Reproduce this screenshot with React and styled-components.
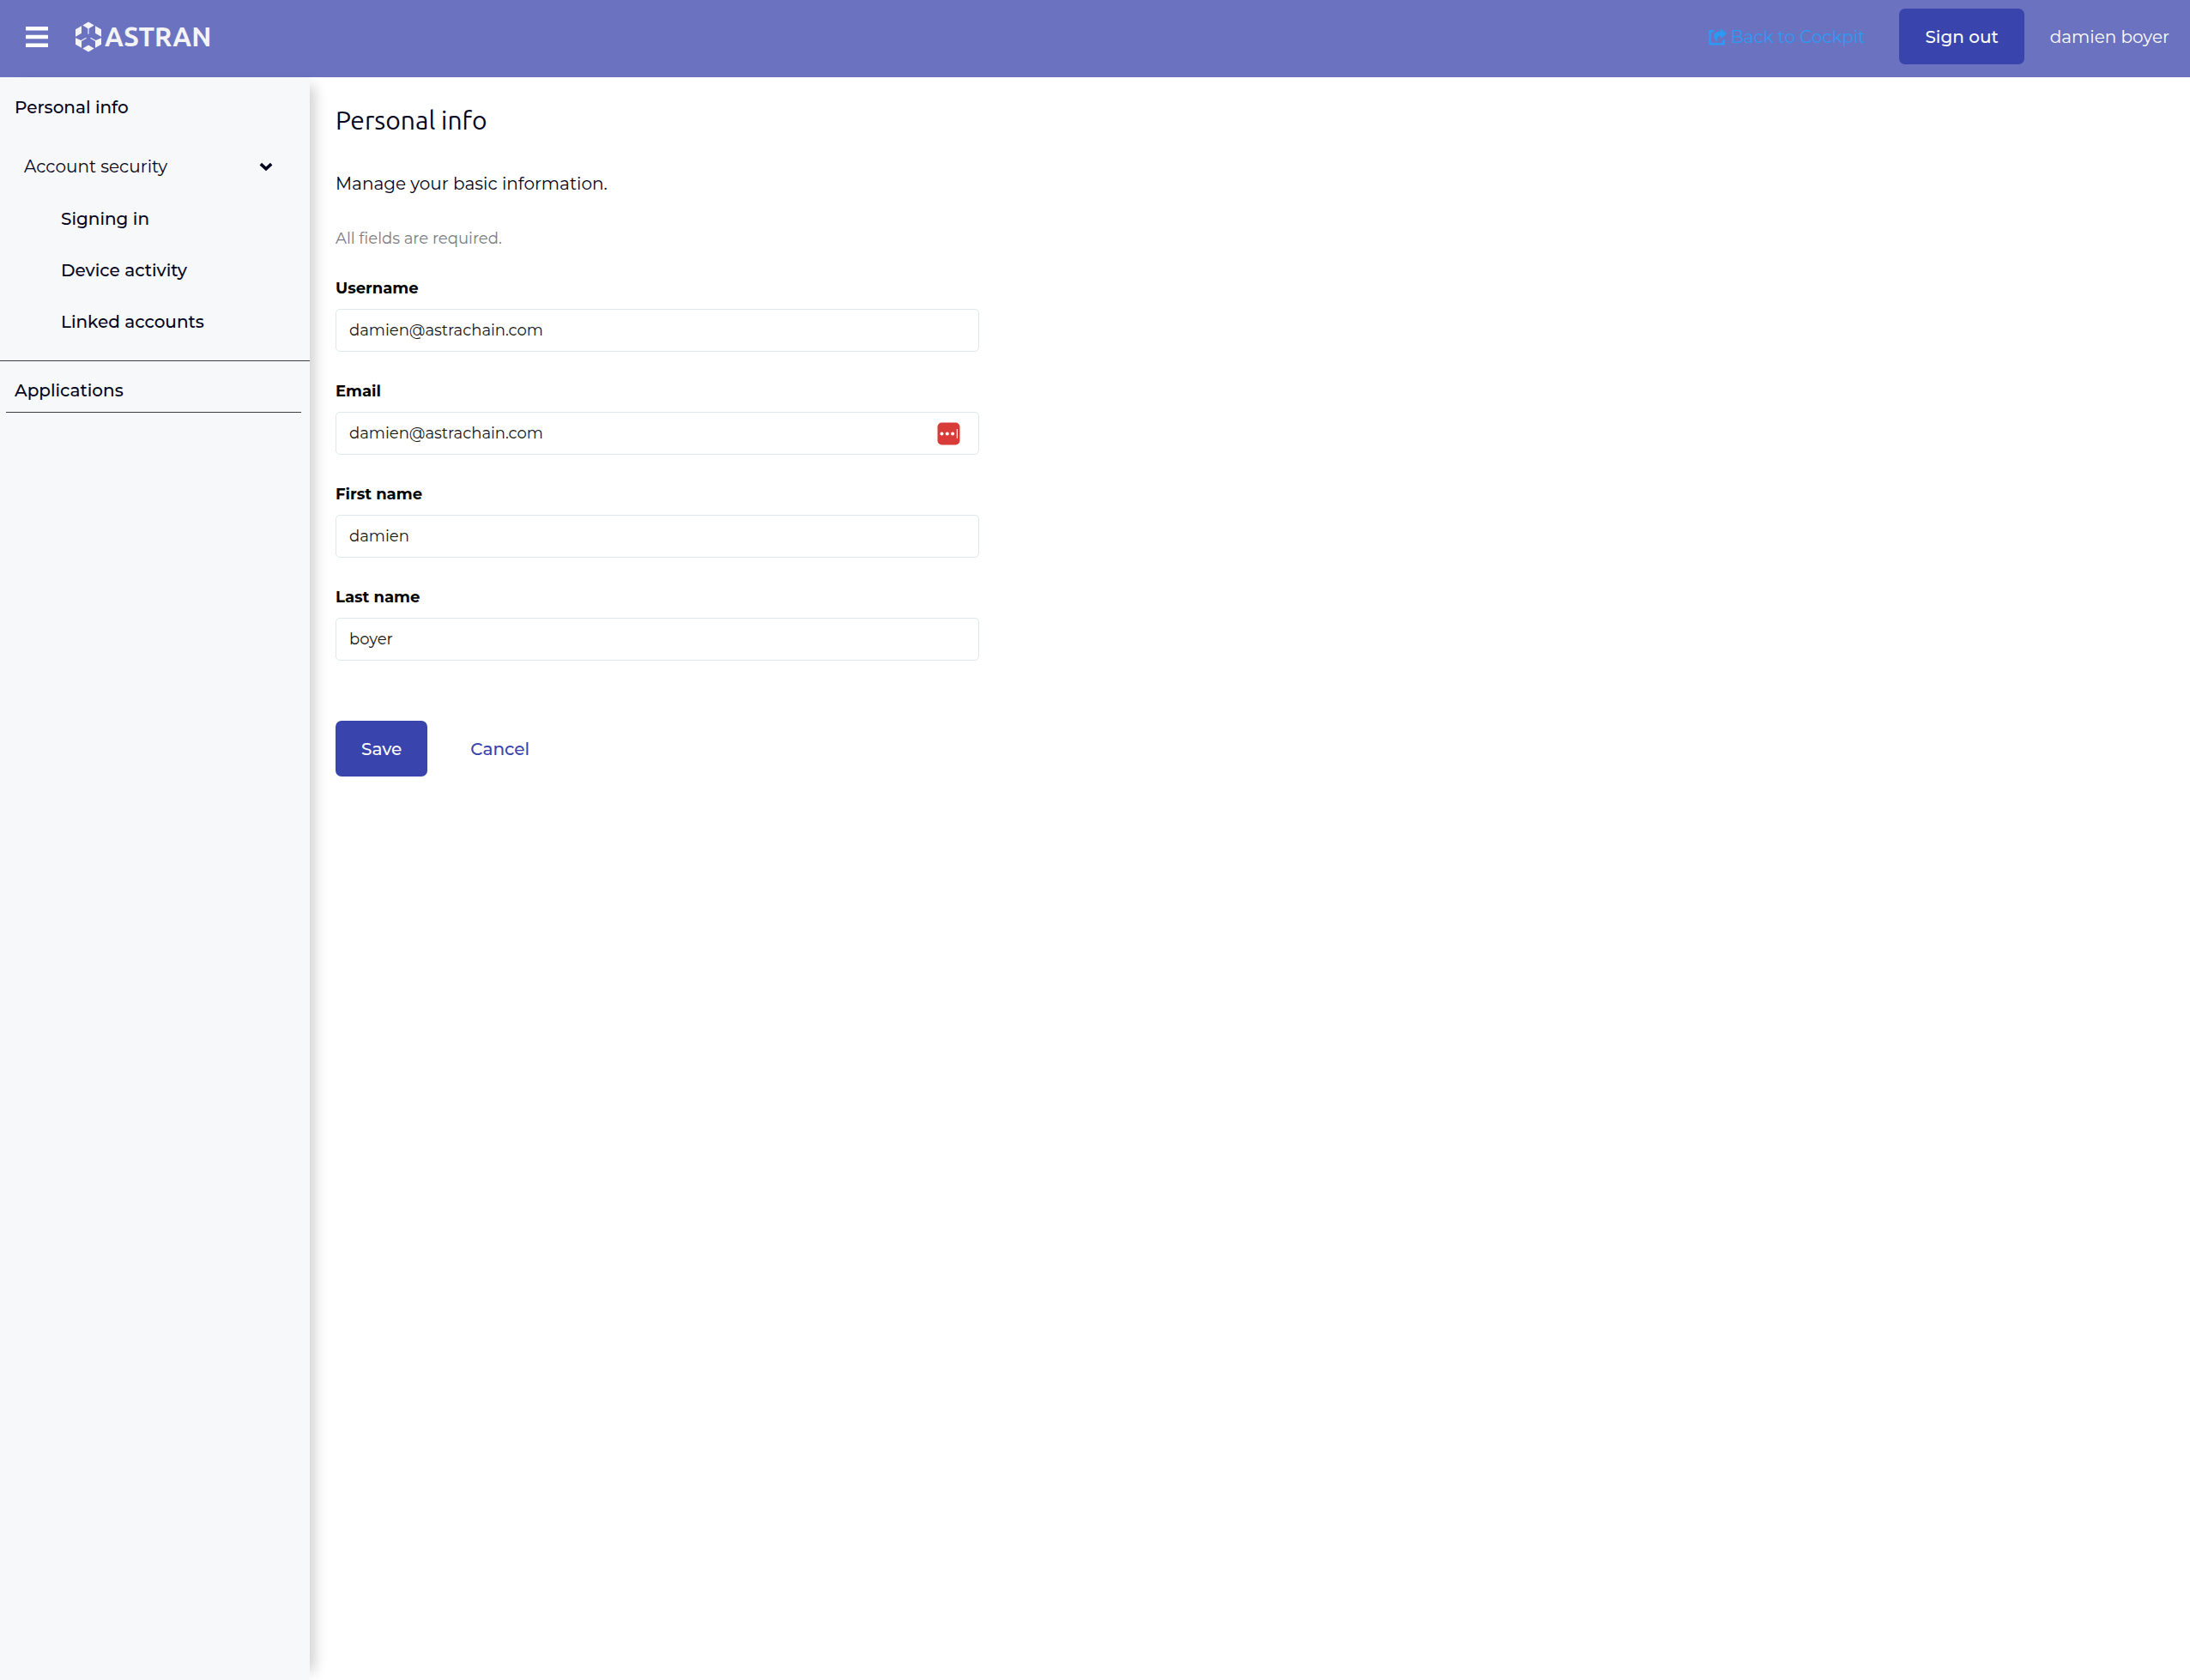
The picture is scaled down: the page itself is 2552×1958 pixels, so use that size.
import React, { useState } from "react";
import styled, { createGlobalStyle } from "styled-components";

const sans = `Montserrat, Inter, "Open Sans", sans-serif`;
const display = `Ubuntu, "Noto Sans", "Open Sans", sans-serif`;
const ink = "#030520";
const primary = "#3944ad";

const GlobalStyle = createGlobalStyle`
  *, *::before, *::after { box-sizing: border-box; }
  body { margin: 0; background: #fff; color: ${ink}; font: 400 20px/30px ${sans}; }
  a { color: inherit; text-decoration: none; }
  button, input { font-family: inherit; }
`;

const Page = styled.div`
  display: flex;
  flex-direction: column;
  min-height: 100vh;
`;

const Header = styled.header`
  display: flex;
  align-items: center;
  justify-content: space-between;
  height: 90px;
  padding: 0 24px 5px 30px;
  background: #6b73c1;
`;

const HeaderGroup = styled.div`
  display: flex;
  align-items: center;
  gap: ${(p) => p.$gap}px;
`;

const IconButton = styled.button`
  display: flex;
  padding: 0;
  border: 0;
  background: none;
  color: #fff;
  cursor: pointer;
`;

const Brand = styled.a`
  display: flex;
  align-items: center;
  gap: 4px;
  color: #f4f4f6;
  font: 700 31px/34px ${display};
`;

const CockpitLink = styled.a`
  display: flex;
  align-items: center;
  gap: 5px;
  margin-right: 10px;
  color: #2b9af3;
`;

const UserName = styled.span`
  color: #fff;
`;

const Button = styled.button`
  height: 65px;
  padding: 0 30px;
  border: 0;
  border-radius: 7px;
  background: ${(p) => (p.$link ? "none" : primary)};
  color: ${(p) => (p.$link ? primary : "#fff")};
  font-size: 20px;
  font-weight: 500;
  cursor: pointer;
`;

const Body = styled.div`
  display: flex;
  flex: 1;
`;

const Sidebar = styled.nav`
  flex: none;
  width: 361px;
  padding-top: 5px;
  background: #f7f8fa;
  box-shadow: 15px 0 15px -10px rgba(3, 3, 3, 0.2);
`;

const NavList = styled.ul`
  margin: 0;
  padding: 0;
  list-style: none;
`;

const NavGroup = styled.li`
  padding: 8px 0 15px;
  border-bottom: 1px solid #3c3f42;
`;

const navRow = `
  display: flex;
  align-items: center;
  font-size: 20px;
`;

const NavLink = styled.a`
  ${navRow}
  height: 60px;
  padding-left: ${(p) => (p.$nested ? 71 : 17)}px;
  font-weight: 500;
`;

const LastNavLink = styled.a`
  ${navRow}
  height: 60px;
  margin: 0 10px 0 7px;
  padding: 9px 0 0 10px;
  border-bottom: 1px solid #3c3f42;
  font-weight: 500;
`;

const NavToggle = styled.button`
  ${navRow}
  justify-content: space-between;
  width: 100%;
  height: 62px;
  padding: 0 43px 0 28px;
  border: 0;
  background: none;
  color: ${ink};
  cursor: pointer;
`;

const Main = styled.main`
  flex: 1;
  min-width: 0;
  padding: 30px;
`;

const Title = styled.h1`
  margin: 0 0 39px;
  font: 400 30px/40px ${display};
`;

const Lead = styled.p`
  margin: 0 0 37px;
`;

const Note = styled.p`
  margin: 0;
  color: #797c80;
  font-size: 18px;
  line-height: 24px;
`;

const Form = styled.form`
  display: flex;
  flex-direction: column;
  gap: 34px;
  max-width: 750px;
`;

const Field = styled.div`
  display: flex;
  flex-direction: column;
  gap: 12px;
`;

const Label = styled.label`
  color: #000;
  font-size: 18px;
  font-weight: 700;
  line-height: 24px;
`;

const InputWrap = styled.div`
  position: relative;
`;

const Input = styled.input`
  display: block;
  width: 100%;
  height: 50px;
  padding: 0 15px;
  border: 1px solid #e0e6ef;
  border-radius: 5px;
  background: #fff;
  color: #151515;
  font-size: 18px;
`;

const FillBadge = styled.button`
  position: absolute;
  top: 12px;
  right: 22px;
  display: flex;
  padding: 0;
  border: 0;
  background: none;
  cursor: pointer;
`;

const Actions = styled.div`
  display: flex;
  gap: 20px;
  padding-top: 36px;
`;

const BarsIcon = () => (
  <svg width="26" height="24" viewBox="0 0 26 24" fill="currentColor" aria-hidden="true">
    <rect width="26" height="4.5" rx="0.5" />
    <rect y="9.7" width="26" height="4.5" rx="0.5" />
    <rect y="19.4" width="26" height="4.5" rx="0.5" />
  </svg>
);

const LogoMark = () => (
  <svg width="30" height="36" viewBox="0 0 30 36" fill="currentColor" aria-hidden="true">
    <path d="M15 0.5 21.7 4.4 15.6 8.2V14.8H14.4V8.2L8.3 4.4Z" />
    <path d="M7 5.3V13.8L0 17.8V9.3Z" />
    <path d="M23 5.3V13.8L30 17.8V9.3Z" />
    <path d="M0 19.2 6.4 22.1 12.2 18.7 12.8 19.7 7 23.1V30.7L0 26.7Z" />
    <path d="M30 19.2 23.6 22.1 17.8 18.7 17.2 19.7 23 23.1V30.7L30 26.7Z" />
    <path d="M15 27.4 21.7 31.4 15 35.5 8.3 31.4Z" />
  </svg>
);

const ShareIcon = () => (
  <svg width="21" height="20" viewBox="0 0 21 20" aria-hidden="true">
    <path d="M6.5 3.2H1.5V18.2H17.7V13.4" fill="none" stroke="currentColor" strokeWidth="2.6" />
    <path d="M14 0 21 6.2 14 12.6V9C10.5 9 9.2 11.2 10.5 15.2C3.7 11.5 4.5 3.7 14 3.5Z" fill="currentColor" />
  </svg>
);

const ChevronIcon = () => (
  <svg width="16" height="11" viewBox="0 0 16 11" aria-hidden="true">
    <path d="M1.8 2.2 8 7.8 14.2 2.2" fill="none" stroke="currentColor" strokeWidth="3.6" />
  </svg>
);

const PasswordIcon = () => (
  <svg width="27" height="27" viewBox="0 0 27 27" aria-hidden="true">
    <rect x="0.5" y="0.5" width="26" height="26" rx="5" fill="#d83c38" />
    <g fill="#fff">
      <circle cx="5.5" cy="13.5" r="2" />
      <circle cx="11.8" cy="13.5" r="2" />
      <circle cx="18.1" cy="13.5" r="2" />
      <rect x="22.8" y="8" width="1.2" height="11" />
    </g>
  </svg>
);

const fields = [
  { id: "username", label: "Username", value: "damien@astrachain.com" },
  { id: "email", label: "Email", value: "damien@astrachain.com", badge: true },
  { id: "firstName", label: "First name", value: "damien" },
  { id: "lastName", label: "Last name", value: "boyer" },
];

export default function App() {
  const [open, setOpen] = useState(true);
  return (
    <Page>
      <GlobalStyle />
      <Header>
        <HeaderGroup $gap={32}>
          <IconButton aria-label="Global navigation"><BarsIcon /></IconButton>
          <Brand href="#"><LogoMark />ASTRAN</Brand>
        </HeaderGroup>
        <HeaderGroup $gap={30}>
          <CockpitLink href="#"><ShareIcon />Back to Cockpit</CockpitLink>
          <Button type="button">Sign out</Button>
          <UserName>damien boyer</UserName>
        </HeaderGroup>
      </Header>
      <Body>
        <Sidebar>
          <NavList>
            <li><NavLink href="#personal-info">Personal info</NavLink></li>
            <NavGroup>
              <NavToggle aria-expanded={open} onClick={() => setOpen(!open)}>
                Account security<ChevronIcon />
              </NavToggle>
              {open && (
                <NavList>
                  <li><NavLink $nested href="#signing-in">Signing in</NavLink></li>
                  <li><NavLink $nested href="#device-activity">Device activity</NavLink></li>
                  <li><NavLink $nested href="#linked-accounts">Linked accounts</NavLink></li>
                </NavList>
              )}
            </NavGroup>
            <li><LastNavLink href="#applications">Applications</LastNavLink></li>
          </NavList>
        </Sidebar>
        <Main>
          <Title>Personal info</Title>
          <Lead>Manage your basic information.</Lead>
          <Form onSubmit={(e) => e.preventDefault()}>
            <Note>All fields are required.</Note>
            {fields.map((f) => (
              <Field key={f.id}>
                <Label htmlFor={f.id}>{f.label}</Label>
                <InputWrap>
                  <Input id={f.id} name={f.id} defaultValue={f.value} />
                  {f.badge && (
                    <FillBadge type="button" aria-label="Fill from password manager"><PasswordIcon /></FillBadge>
                  )}
                </InputWrap>
              </Field>
            ))}
            <Actions>
              <Button type="submit">Save</Button>
              <Button type="reset" $link>Cancel</Button>
            </Actions>
          </Form>
        </Main>
      </Body>
    </Page>
  );
}
